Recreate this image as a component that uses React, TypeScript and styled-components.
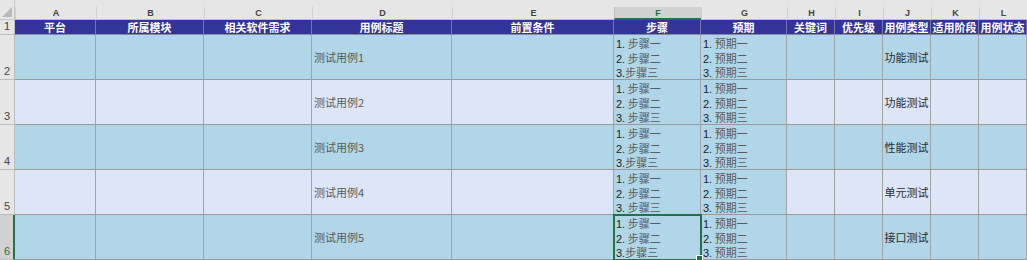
import React from 'react';
import styled, { createGlobalStyle } from 'styled-components';

const GlobalStyle = createGlobalStyle`
	html, body {
		margin: 0;
		padding: 0;
		background: #e6e6e6;
		overflow: hidden;
	}
	body {
		font-family: "Liberation Sans", "Noto Sans CJK SC", sans-serif;
	}
`;

const COLS = ['A', 'B', 'C', 'D', 'E', 'F', 'G', 'H', 'I', 'J', 'K', 'L'];
const WIDTHS = [15, 81, 108, 108, 140, 162, 87, 86, 48, 48, 48, 48, 48];
const HEADERS = [
	'平台',
	'所属模块',
	'相关软件需求',
	'用例标题',
	'前置条件',
	'步骤',
	'预期',
	'关键词',
	'优先级',
	'用例类型',
	'适用阶段',
	'用例状态',
];

interface Case {
	title: string;
	type: string;
	steps: string[];
	expects: string[];
}

const CASES: Case[] = [
	{ title: '测试用例1', type: '功能测试', steps: ['1. 步骤一', '2. 步骤二', '3.步骤三'], expects: ['1. 预期一', '2. 预期二', '3. 预期三'] },
	{ title: '测试用例2', type: '功能测试', steps: ['1. 步骤一', '2. 步骤二', '3. 步骤三'], expects: ['1. 预期一', '2. 预期二', '3. 预期三'] },
	{ title: '测试用例3', type: '性能测试', steps: ['1. 步骤一', '2. 步骤二', '3.步骤三'], expects: ['1. 预期一', '2. 预期二', '3. 预期三'] },
	{ title: '测试用例4', type: '单元测试', steps: ['1. 步骤一', '2. 步骤二', '3. 步骤三'], expects: ['1. 预期一', '2. 预期二', '3. 预期三'] },
	{ title: '测试用例5', type: '接口测试', steps: ['1. 步骤一', '2. 步骤二', '3.步骤三'], expects: ['1. 预期一', '2. 预期二', '3. 预期三'] },
];

const Sheet = styled.div`
	display: grid;
	grid-template-columns: ${WIDTHS.map((w) => `${w}px`).join(' ')};
	grid-template-rows: 20px 15px repeat(5, 45px);
	width: 1027px;
	height: 260px;
	overflow: hidden;
	background: #e6e6e6;
	font-size: 11px;
`;

const Corner = styled.div`
	position: relative;
	background: #e6e6e6;
	border-bottom: 1px solid #c6c6c6;
	border-right: 1px solid #c6c6c6;
	box-sizing: border-box;

	&::after {
		content: '';
		position: absolute;
		right: 2px;
		bottom: 2px;
		width: 0;
		height: 0;
		border-left: 10px solid transparent;
		border-bottom: 10px solid #b9b9b9;
	}
`;

const ColHead = styled.div<{ $selected?: boolean }>`
	margin-top: 7px;
	display: flex;
	align-items: center;
	justify-content: center;
	box-sizing: border-box;
	background: ${(p) => (p.$selected ? '#d2d2d2' : '#e6e6e6')};
	border-left: 1px solid ${(p) => (p.$selected ? '#bdbdbd' : '#d0d0d0')};
	border-bottom: ${(p) => (p.$selected ? '2px solid #217346' : '1px solid #bdbdbd')};
	color: ${(p) => (p.$selected ? '#217346' : '#444')};
	font-family: "Liberation Sans", sans-serif;
	font-size: 9px;
	font-weight: bold;
`;

const RowHead = styled.div<{ $selected?: boolean }>`
	display: flex;
	align-items: flex-end;
	padding: 0 0 1px 4px;
	box-sizing: border-box;
	background: ${(p) => (p.$selected ? '#d2d2d2' : '#e6e6e6')};
	border-bottom: 1px solid #bdbdbd;
	border-right: ${(p) => (p.$selected ? '2px solid #217346' : '1px solid #bdbdbd')};
	color: ${(p) => (p.$selected ? '#217346' : '#444')};
	font-family: "Liberation Sans", sans-serif;
	font-size: 11px;
	line-height: 13px;
`;

const HeaderCell = styled.div`
	display: flex;
	align-items: center;
	justify-content: center;
	box-sizing: border-box;
	background: #333399;
	border-right: 1px solid #7474b4;
	border-bottom: 1px solid #8a8aa8;
	color: #ffffff;
	font-family: "Noto Sans CJK SC", sans-serif;
	font-weight: bold;
	font-size: 11px;
	white-space: nowrap;
	overflow: hidden;
`;

const Cell = styled.div<{ $alt: boolean; $align?: 'left' | 'center' | 'top'; $selected?: boolean }>`
	position: relative;
	display: flex;
	flex-direction: column;
	justify-content: ${(p) => (p.$align === 'top' ? 'flex-start' : 'center')};
	align-items: ${(p) => (p.$align === 'center' ? 'center' : 'flex-start')};
	padding: ${(p) => (p.$align === 'top' ? '1px 2px 0' : '0 2px')};
	box-sizing: border-box;
	background: ${(p) => (p.$alt ? '#dde6f8' : '#b0d6e8')};
	border-right: 1px solid #a3a3a3;
	border-bottom: 1px solid #999999;
	color: ${(p) => (p.$align === 'center' ? '#2b2b2b' : '#5a5a5a')};
	font-family: "Noto Sans CJK SC", sans-serif;
	font-size: 11px;
	white-space: nowrap;
	${(p) =>
		p.$selected &&
		`
		outline: 2px solid #217346;
		outline-offset: -1px;
		z-index: 1;
		&::after {
			content: '';
			position: absolute;
			right: -3px;
			bottom: -3px;
			width: 5px;
			height: 5px;
			background: #217346;
			border: 1px solid #fff;
		}
	`}
`;

const Line = styled.div`
	height: 14.5px;
	line-height: 14.5px;

	b {
		font-weight: normal;
		color: #1e1e1e;
		font-family: "Liberation Sans", sans-serif;
	}
`;

const StepLines = ({ lines }: { lines: string[] }) => (
	<>
		{lines.map((l) => {
			const m = l.match(/^(\d\.)(.*)$/);
			return (
				<Line key={l}>
					<b>{m ? m[1] : ''}</b>
					{m ? m[2] : l}
				</Line>
			);
		})}
	</>
);

const App = () => {
	return (
		<>
			<GlobalStyle />
			<Sheet>
				<Corner />
				{COLS.map((c) => (
					<ColHead key={c} $selected={c === 'F'}>
						{c}
					</ColHead>
				))}

				<RowHead>1</RowHead>
				{HEADERS.map((h) => (
					<HeaderCell key={h}>{h}</HeaderCell>
				))}

				{CASES.map((row, i) => {
					const alt = i % 2 === 1;
					const isLast = i === CASES.length - 1;
					return (
						<React.Fragment key={row.title}>
							<RowHead $selected={isLast}>{i + 2}</RowHead>
							<Cell $alt={alt} />
							<Cell $alt={alt} />
							<Cell $alt={alt} />
							<Cell $alt={alt} $align='left'>
								{row.title}
							</Cell>
							<Cell $alt={alt} />
							<Cell $alt={false} $align='top' $selected={isLast}>
								<StepLines lines={row.steps} />
							</Cell>
							<Cell $alt={false} $align='top'>
								<StepLines lines={row.expects} />
							</Cell>
							<Cell $alt={alt} />
							<Cell $alt={alt} />
							<Cell $alt={alt} $align='center'>
								{row.type}
							</Cell>
							<Cell $alt={alt} />
							<Cell $alt={alt} />
						</React.Fragment>
					);
				})}
			</Sheet>
		</>
	);
};

export default App;
